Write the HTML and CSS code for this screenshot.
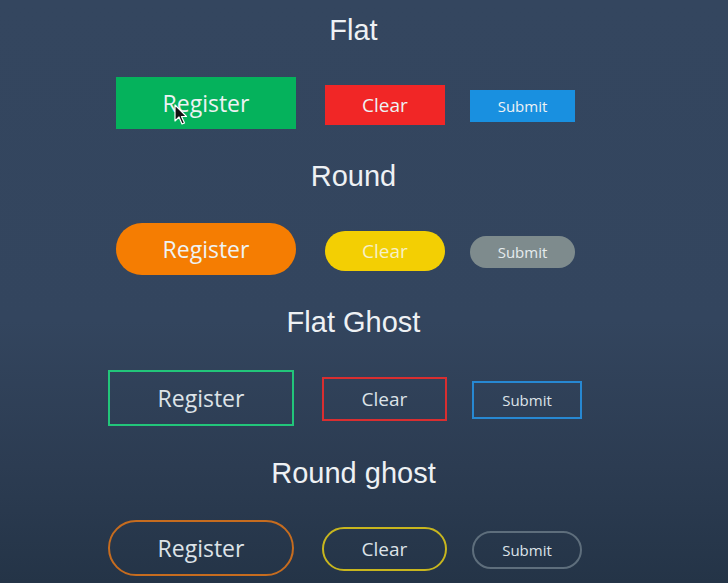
FILE: index.html
```html
<!DOCTYPE html>
<html>
<head>
<meta charset="utf-8">
<link rel="stylesheet" href="styles.css">
</head>
<body>
<main class="page">
  <h2 class="title">Flat</h2>
  <div class="row row-solid">
    <button class="btn lg flat green">Register</button>
    <button class="btn md flat red">Clear</button>
    <button class="btn sm flat blue">Submit</button>
  </div>
  <h2 class="title">Round</h2>
  <div class="row row-solid">
    <button class="btn lg round orange">Register</button>
    <button class="btn md round yellow">Clear</button>
    <button class="btn sm round grey">Submit</button>
  </div>
  <h2 class="title t3">Flat Ghost</h2>
  <div class="row row-ghost r3">
    <button class="btn glg ghost g-green">Register</button>
    <button class="btn gmd ghost g-red">Clear</button>
    <button class="btn gsm ghost g-blue">Submit</button>
  </div>
  <h2 class="title t4">Round ghost</h2>
  <div class="row row-ghost r4">
    <button class="btn glg ghost round g-orange">Register</button>
    <button class="btn gmd ghost round g-yellow">Clear</button>
    <button class="btn gsm ghost round g-grey">Submit</button>
  </div>
</main>
<svg class="cursor" width="14" height="22" viewBox="0 0 14 22">
  <path d="M1 1 L1 17 L5 13 L8 20 L10.5 19 L7.5 12.5 L12.5 12.5 Z" fill="#111" stroke="#fff" stroke-width="1.2" stroke-linejoin="round"/>
</svg>
</body>
</html>
```
FILE: styles.css
```css
html, body {
  margin: 0;
  padding: 0;
}
body {
  width: 728px;
  height: 583px;
  overflow: hidden;
  position: relative;
  background: linear-gradient(to bottom, #34465f 0%, #33455e 55%, #2c3c52 80%, #243447 100%);
  font-family: "Open Sans", "Noto Sans", sans-serif;
}
.page {
  display: flex;
  flex-direction: column;
  gap: 25px;
  padding-top: 12px;
}
.title {
  margin: 0;
  width: 707px;
  text-align: center;
  font-family: "Liberation Sans", Arial, sans-serif;
  font-weight: normal;
  font-size: 29px;
  line-height: 36px;
  height: 36px;
  color: #eef1f4;
}
.t4 { margin-top: 2px; }
.row {
  display: flex;
  align-items: flex-start;
  height: 60px;
}
.row-solid { padding-left: 116px; }
.row-solid .btn.lg { margin-right: 29px; margin-top: 4px; }
.row-solid .btn.md { margin-right: 25px; margin-top: 12px; }
.row-solid .btn.sm { margin-top: 17px; }
.row-ghost { padding-left: 108px; }
.row-ghost .btn.glg { margin-right: 28px; margin-top: 2px; }
.row-ghost .btn.gmd { margin-right: 25px; margin-top: 9px; }
.row-ghost .btn.gsm { margin-top: 13px; }
.r3 { margin-top: 3px; }
.r4 { margin-top: 2px; }

.btn {
  box-sizing: border-box;
  border: 0;
  padding: 0;
  display: flex;
  align-items: center;
  justify-content: center;
  font-family: "Open Sans", "Noto Sans", sans-serif;
  font-weight: 500;
  color: #eef2f4;
  border-radius: 0;
}
.lg { width: 180px; height: 52px; font-size: 23px; }
.md { width: 120px; height: 40px; font-size: 19px; }
.sm { width: 105px; height: 32px; font-size: 15px; }
.glg { width: 186px; height: 56px; font-size: 23px; }
.gmd { width: 125px; height: 44px; font-size: 19px; }
.gsm { width: 110px; height: 38px; font-size: 15px; }

.round { border-radius: 30px; }

.green { background: #05b25c; }
.red { background: #f12626; }
.blue { background: #1990e0; }
.orange { background: #f57d02; }
.yellow { background: #f3cf03; color: #f7f0c8; }
.grey { background: #7e8b8d; color: #e6ecee; }

.ghost {
  background: transparent;
  border: 2px solid;
  color: #dde3e8;
}
.g-green { border-color: #22c57a; }
.g-red { border-color: #d92e30; }
.g-blue { border-color: #2788d2; }
.g-orange { border-color: #c66c1f; }
.g-yellow { border-color: #c8b61e; }
.g-grey { border-color: #5e6e7c; }

.cursor {
  position: absolute;
  left: 174px;
  top: 104px;
}
```
